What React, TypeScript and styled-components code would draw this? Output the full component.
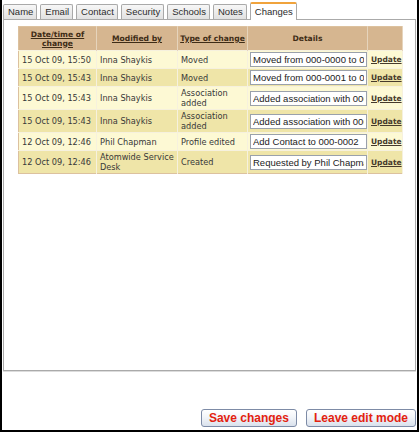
import React from "react";
import styled, { createGlobalStyle } from "styled-components";

const GlobalStyle = createGlobalStyle`
  html, body { margin: 0; padding: 0; background: #ffffff; }
  body { font-family: "DejaVu Sans", Verdana, sans-serif; }
  * { box-sizing: border-box; }
`;

const Frame = styled.div`
  width: 419px;
  height: 432px;
  border: 2px solid #000;
  border-top: none;
  display: flex;
  flex-direction: column;
  background: #fff;
`;

const TabBar = styled.div`
  display: flex;
  align-items: flex-end;
  gap: 3px;
  padding: 2px 0 0 1px;
  position: relative;
  z-index: 1;
`;

const Tab = styled.div<{ $active?: boolean }>`
  font-family: "Liberation Sans", Arial, sans-serif;
  font-size: 9.5px;
  color: #2c2c2c;
  padding: 0 3px 0 4px;
  border: 1px solid #a9a9a9;
  border-bottom: none;
  border-radius: 2px 2px 0 0;
  height: ${(p) => (p.$active ? "18px" : "15px")};
  line-height: ${(p) => (p.$active ? "15px" : "14px")};
  background: ${(p) =>
    p.$active ? "#ffffff" : "linear-gradient(#f7f7f7, #e1e1e1)"};
  border-top: ${(p) => (p.$active ? "2px solid #f0a33c" : "1px solid #a9a9a9")};
  margin-bottom: ${(p) => (p.$active ? "-1px" : "0")};
  white-space: nowrap;
`;

const Panel = styled.div`
  margin: 0 1px;
  height: 352px;
  border: 1px solid #aaaaaa;
  box-shadow: 0 1px 0 #dcdcdc;
  background: #fff;
  padding: 6px 0 0 14px;
`;

const Table = styled.table`
  width: 384px;
  table-layout: fixed;
  border-collapse: collapse;
  border: 1px solid #dcc19e;
`;

const HeadCell = styled.th<{ $plain?: boolean }>`
  background: #d6b690;
  color: #3e2c16;
  font-weight: bold;
  font-size: 7.6px;
  line-height: 9px;
  height: 24px;
  text-align: center;
  vertical-align: middle;
  text-decoration: ${(p) => (p.$plain ? "none" : "underline")};
  border-right: 1px solid #e6d4bc;
  padding: 1px 2px;
`;

const Row = styled.tr<{ $shade?: boolean }>`
  background: ${(p) => (p.$shade ? "#efe5a8" : "#fdf9d4")};
`;

const Cell = styled.td`
  font-size: 8.2px;
  line-height: 10px;
  color: #383838;
  padding: 1px 3px;
  vertical-align: middle;
  border-right: 1px solid #f6f1de;
  border-top: 1px solid #f6f1de;
`;

const InputCell = styled(Cell)`
  padding: 1px 2px;
`;

const DetailInput = styled.input`
  display: block;
  width: 117px;
  height: 15px;
  border: 1px solid #9aa1ab;
  background: #fff;
  font-family: "Liberation Sans", Arial, sans-serif;
  font-size: 9.5px;
  color: #222;
  padding: 0 2px;
  margin: 0;
  outline: none;
`;

const UpdateLink = styled.a`
  font-size: 7.5px;
  font-weight: bold;
  color: #463a2c;
  text-decoration: underline;
`;

const Footer = styled.div`
  margin-top: auto;
  display: flex;
  justify-content: flex-end;
  gap: 9px;
  padding: 0 1px 3px 0;
`;

const ActionButton = styled.button`
  height: 18px;
  padding: 0 7px;
  border: 1px solid #7d8ba6;
  border-radius: 3px;
  background: linear-gradient(#ffffff, #f2f5f9 45%, #d9e1ec);
  font-family: "Liberation Sans", Arial, sans-serif;
  font-weight: bold;
  font-size: 12px;
  line-height: 16px;
  color: #e3220f;
  cursor: pointer;
`;

type Change = {
  when: string;
  who: string;
  kind: string;
  details: string;
};

const changes: Change[] = [
  { when: "15 Oct 09, 15:50", who: "Inna Shaykis", kind: "Moved", details: "Moved from 000-0000 to 000-0001" },
  { when: "15 Oct 09, 15:43", who: "Inna Shaykis", kind: "Moved", details: "Moved from 000-0001 to 000-0000" },
  { when: "15 Oct 09, 15:43", who: "Inna Shaykis", kind: "Association added", details: "Added association with 000-0001" },
  { when: "15 Oct 09, 15:43", who: "Inna Shaykis", kind: "Association added", details: "Added association with 000-0000" },
  { when: "12 Oct 09, 12:46", who: "Phil Chapman", kind: "Profile edited", details: "Add Contact to 000-0002" },
  { when: "12 Oct 09, 12:46", who: "Atomwide Service Desk", kind: "Created", details: "Requested by Phil Chapman" },
];

const tabs = ["Name", "Email", "Contact", "Security", "Schools", "Notes", "Changes"];

export default function App() {
  return (
    <>
      <GlobalStyle />
      <Frame>
        <TabBar>
          {tabs.map((t) => (
            <Tab key={t} $active={t === "Changes"}>
              {t}
            </Tab>
          ))}
        </TabBar>
        <Panel>
          <Table>
            <colgroup>
              <col style={{ width: 78 }} />
              <col style={{ width: 81 }} />
              <col style={{ width: 70 }} />
              <col style={{ width: 120 }} />
              <col style={{ width: 35 }} />
            </colgroup>
            <thead>
              <tr>
                <HeadCell>Date/time of change</HeadCell>
                <HeadCell>Modified by</HeadCell>
                <HeadCell>Type of change</HeadCell>
                <HeadCell $plain>Details</HeadCell>
                <HeadCell $plain />
              </tr>
            </thead>
            <tbody>
              {changes.map((c, i) => (
                <Row key={i} $shade={i % 2 === 1}>
                  <Cell>{c.when}</Cell>
                  <Cell>{c.who}</Cell>
                  <Cell>{c.kind}</Cell>
                  <InputCell>
                    <DetailInput readOnly value={c.details} />
                  </InputCell>
                  <Cell>
                    <UpdateLink href="#">Update</UpdateLink>
                  </Cell>
                </Row>
              ))}
            </tbody>
          </Table>
        </Panel>
        <Footer>
          <ActionButton>Save changes</ActionButton>
          <ActionButton>Leave edit mode</ActionButton>
        </Footer>
      </Frame>
    </>
  );
}
